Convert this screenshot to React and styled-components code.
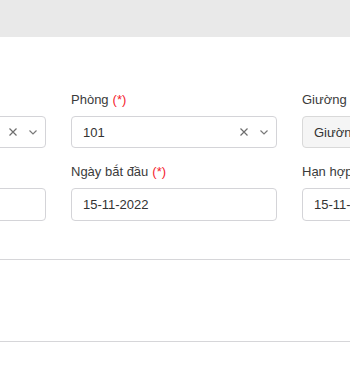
import React from "react";
import styled, { createGlobalStyle } from "styled-components";

const Global = createGlobalStyle`
  html, body { margin: 0; padding: 0; background: #fff; }
  body { font-family: "Liberation Sans", Arial, sans-serif; }
  #root { width: 350px; height: 383px; overflow: hidden; }
`;

const Page = styled.div`
  width: 350px;
  height: 383px;
  overflow: hidden;
  background: #fff;
`;

const TopBar = styled.div`
  height: 37px;
  background: #e9e9e9;
`;

const Form = styled.div`
  margin-top: 53px;
  margin-left: -160px;
  display: grid;
  grid-template-columns: repeat(3, 206px);
  column-gap: 25px;
  row-gap: 14px;
`;

const Field = styled.div`
  display: flex;
  flex-direction: column;
  gap: 6px;
`;

const Label = styled.div`
  height: 20px;
  line-height: 20px;
  font-size: 13px;
  color: #3b3b3b;
  white-space: nowrap;
`;

const Req = styled.span`
  color: #f5222d;
  margin-left: 4px;
`;

const Box = styled.div`
  box-sizing: border-box;
  height: ${(p) => (p.$tall ? 33 : 32)}px;
  border: 1px solid ${(p) => (p.$disabled ? "#d9d9d9" : "#d4d4d8")};
  border-radius: 4px;
  background: ${(p) => (p.$disabled ? "#f5f5f5" : "#fff")};
  display: flex;
  align-items: center;
  padding: 0 ${(p) => (p.$select ? 7 : 11)}px 0 11px;
  font-size: 13px;
  color: #333;
  overflow: hidden;
  white-space: nowrap;
`;

const Value = styled.span`
  flex: 1;
  overflow: hidden;
`;

const Icons = styled.span`
  display: flex;
  align-items: center;
  gap: 10px;
  color: #8c8c8c;
`;

const Divider = styled.div`
  height: 1px;
  background: #d6d6d9;
  margin-top: ${(p) => p.$top}px;
`;

const ClearIcon = () => (
  <svg width="10" height="10" viewBox="0 0 10 10">
    <path d="M1.5 1.5 L8.5 8.5 M8.5 1.5 L1.5 8.5" stroke="#6e6e6e" strokeWidth="1.2" fill="none" />
  </svg>
);

const Chevron = () => (
  <svg width="10" height="10" viewBox="0 0 10 10">
    <path d="M1.5 3.5 L5 7 L8.5 3.5" stroke="#7a7a7a" strokeWidth="1.2" fill="none" />
  </svg>
);

const SelectIcons = () => (
  <Icons>
    <ClearIcon />
    <Chevron />
  </Icons>
);

export default function App() {
  return (
    <Page>
      <Global />
      <TopBar />
      <Form>
        <Field>
          <Label>Tòa nhà <Req>(*)</Req></Label>
          <Box $select>
            <Value>A</Value>
            <SelectIcons />
          </Box>
        </Field>
        <Field>
          <Label>Phòng<Req>(*)</Req></Label>
          <Box $select>
            <Value>101</Value>
            <SelectIcons />
          </Box>
        </Field>
        <Field>
          <Label>Giường</Label>
          <Box $disabled>
            <Value>Giường</Value>
          </Box>
        </Field>
        <Field>
          <Label>Ngày ký</Label>
          <Box $tall>
            <Value></Value>
          </Box>
        </Field>
        <Field>
          <Label>Ngày bắt đầu<Req>(*)</Req></Label>
          <Box $tall>
            <Value>15-11-2022</Value>
          </Box>
        </Field>
        <Field>
          <Label>Hạn hợp đồng</Label>
          <Box $tall>
            <Value>15-11-2023</Value>
          </Box>
        </Field>
      </Form>
      <Divider $top={38} />
      <Divider $top={81} />
    </Page>
  );
}
